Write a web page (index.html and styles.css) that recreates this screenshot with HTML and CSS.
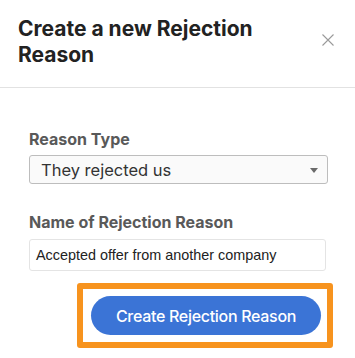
FILE: index.html
```html
<!DOCTYPE html>
<html lang="en">
<head>
<meta charset="utf-8">
<title>Create a new Rejection Reason</title>
<link rel="stylesheet" href="styles.css">
</head>
<body>
<div class="modal">
  <header class="head">
    <h1 class="title">Create a new Rejection Reason</h1>
    <button class="close" aria-label="Close">
      <svg width="12" height="12" viewBox="0 0 12 12"><path d="M0.5 0.5 L11.5 11.5 M11.5 0.5 L0.5 11.5" stroke="#9a9a9a" stroke-width="1.1" fill="none"/></svg>
    </button>
  </header>
  <div class="content">
    <div class="field">
      <label class="label">Reason Type</label>
      <div class="select">
        <span class="select-text">They rejected us</span>
        <svg class="caret" width="8" height="5" viewBox="0 0 8 5"><path d="M0 0 H8 L4 5 Z" fill="#6a6a6a"/></svg>
      </div>
    </div>
    <div class="field field-2">
      <label class="label">Name of Rejection Reason</label>
      <div class="input">Accepted offer from another company</div>
    </div>
    <div class="actions">
      <div class="highlight">
        <button class="primary">Create Rejection Reason</button>
      </div>
    </div>
  </div>
</div>
</body>
</html>
```
FILE: styles.css
```css
html, body {
  margin: 0;
  padding: 0;
  background: #fff;
}
body {
  font-family: Inter, "Noto Sans", sans-serif;
  color: #222;
}
.modal {
  width: 355px;
}
.head {
  display: flex;
  justify-content: space-between;
  align-items: flex-start;
  padding: 16px 21px 19px 18px;
  border-bottom: 1px solid #e2e2e2;
}
.title {
  margin: 0;
  font-size: 21px;
  line-height: 26px;
  font-weight: 700;
  color: #222;
  max-width: 280px;
}
.close {
  margin-top: 18px;
  padding: 0;
  border: 0;
  background: none;
  width: 12px;
  height: 12px;
  display: block;
}
.close svg { display: block; }
.content {
  padding: 42px 27px 0 29px;
}
.field {
  display: flex;
  flex-direction: column;
}
.field-2 {
  margin-top: 29px;
}
.label {
  font-size: 16px;
  line-height: 18px;
  font-weight: 700;
  color: #595959;
  margin-bottom: 7px;
}
.field-2 .label {
  margin-bottom: 8px;
}
.select {
  box-sizing: border-box;
  width: 299px;
  height: 29px;
  border: 1px solid #bdbdbd;
  border-radius: 3px;
  background: #fafafa;
  display: flex;
  align-items: center;
  justify-content: space-between;
  padding: 0 9px 0 11px;
}
.select-text {
  font-size: 16.5px;
  color: #333;
}
.caret {
  display: block;
  margin-top: 1px;
}
.input {
  box-sizing: border-box;
  width: 297px;
  height: 32px;
  border: 1px solid #e4e4e4;
  border-radius: 3px;
  padding: 0 6px;
  display: flex;
  align-items: center;
  font-family: "Liberation Sans", Arial, sans-serif;
  font-size: 14.4px;
  color: #222;
}
.actions {
  display: flex;
  justify-content: flex-end;
  margin-top: 12px;
  margin-right: -5px;
}
.highlight {
  border: 6px solid #f7931e;
  border-radius: 3px;
  padding: 7px 6px 7px 8px;
}
.primary {
  display: block;
  width: 230px;
  height: 39px;
  border: 0;
  border-radius: 20px;
  background: #3b74d6;
  color: #fff;
  font-family: Inter, "Noto Sans", sans-serif;
  font-size: 16px;
  font-weight: 500;
  letter-spacing: -0.3px;
  padding: 0;
}
```
